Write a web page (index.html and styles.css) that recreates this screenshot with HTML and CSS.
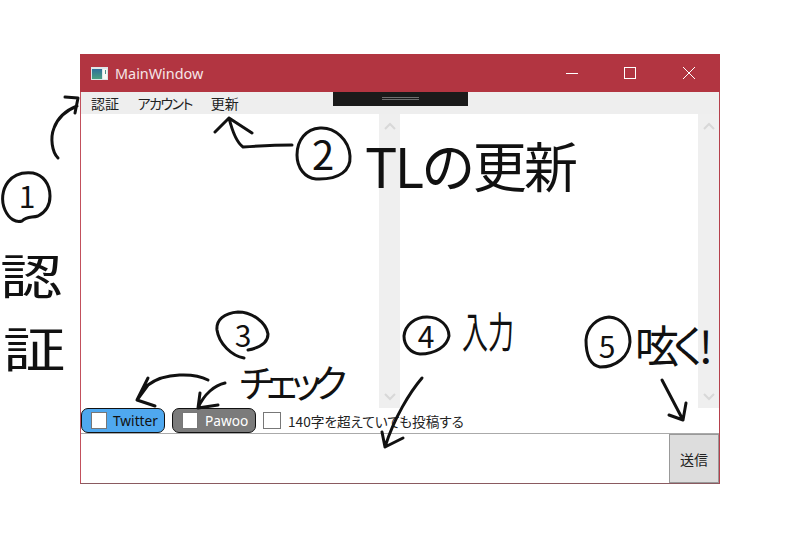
FILE: index.html
```html
<!DOCTYPE html>
<html lang="ja">
<head>
<meta charset="utf-8">
<title>MainWindow</title>
<link rel="stylesheet" href="styles.css">
</head>
<body>
<div class="stage">
  <div class="window">
    <header class="titlebar">
      <svg class="appicon" width="17" height="13" viewBox="0 0 17 13">
        <defs><linearGradient id="g" x1="0" y1="0" x2="0" y2="1"><stop offset="0" stop-color="#2f6f9a"/><stop offset="1" stop-color="#4a9f80"/></linearGradient></defs>
        <rect x="0" y="0" width="17" height="13" fill="#dfe6e8"/>
        <rect x="1" y="2" width="10" height="10" fill="url(#g)"/>
        <rect x="12" y="2" width="4" height="10" fill="#f8f8f4"/>
        <rect x="14" y="3" width="1" height="4" fill="#4d8f86"/>
      </svg>
      <span class="title">MainWindow</span>
      <div class="caption">
        <span class="capbtn"><svg width="12" height="12" viewBox="0 0 12 12"><path d="M0 6.5H12" class="capstroke"/></svg></span>
        <span class="capbtn"><svg width="12" height="12" viewBox="0 0 12 12"><rect x="0.5" y="0.5" width="11" height="11" class="capstroke"/></svg></span>
        <span class="capbtn"><svg width="12" height="12" viewBox="0 0 12 12"><path d="M0 0L12 12M12 0L0 12" class="capstroke"/></svg></span>
      </div>
    </header>
    <nav class="menu">
      <span class="menuitem">認証</span>
      <span class="menuitem menuitem-kana">アカウント</span>
      <span class="menuitem">更新</span>
      <div class="devbar"><i class="grip"></i></div>
    </nav>
    <main class="panes">
      <div class="list"></div>
      <div class="scroll"><svg class="chev" width="14" height="8" viewBox="0 0 14 8"><path d="M2 7L7 2L12 7"/></svg><svg class="chev" width="14" height="8" viewBox="0 0 14 8"><path d="M2 1L7 6L12 1"/></svg></div>
      <div class="list"></div>
      <div class="scroll"><svg class="chev" width="14" height="8" viewBox="0 0 14 8"><path d="M2 7L7 2L12 7"/></svg><svg class="chev" width="14" height="8" viewBox="0 0 14 8"><path d="M2 1L7 6L12 1"/></svg></div>
    </main>
    <div class="options">
      <label class="pill pill-twitter"><span class="box"></span>Twitter</label>
      <label class="pill pill-pawoo"><span class="box"></span>Pawoo</label>
      <label class="over"><span class="box"></span>140字を超えていても投稿する</label>
    </div>
    <div class="compose">
      <div class="input"></div>
      <button class="send">送信</button>
    </div>
  </div>
  <svg class="ink" width="800" height="538" viewBox="0 0 800 538">
    <!-- 1 -->
    <path d="M58 158C52 152 50 138 54 128C58 117 67 110 77 106M65 97L78 98L75 113"/>
    <path d="M22 221C16 223 9 219 5 210C1 201 2 190 8 182C14 174 24 172 33 173C43 175 50 184 50 196C50 206 46 212 38 216C32 218 27 216 22 221Z"/>
    <text class="digit" x="27" y="208">1</text>
    <text class="hand-s" transform="translate(0,294) scale(1.3,1)">認</text>
    <text class="hand-s" transform="translate(3,367) scale(1.3,1)">証</text>
    <!-- 2 -->
    <path d="M215 132L229 118L252 133M229 118C232 130 236 142 243 147C258 146 275 145 292 145"/>
    <path d="M316 179C305 178 297 168 297 155C297 140 306 129 320 128C335 127 349 140 350 156C351 170 340 180 316 179Z"/>
    <text class="digit digit-l" x="323" y="170">2</text>
    <text class="hand" x="365" y="188" textLength="213">TLの更新</text>
    <!-- 3 -->
    <path d="M244 358C232 356 219 344 217 330C216 320 224 313 238 312C252 312 266 322 268 334C268 344 258 348 248 350"/>
    <text class="digit" x="243" y="347">3</text>
    <text class="hand-c" x="238" y="397" textLength="112">チェック</text>
    <path d="M208 380C195 373 165 372 148 385L137 400M148 378L137 400L155 406"/>
    <path d="M225 383C215 385 204 394 198 408M200 393L198 408L218 405"/>
    <!-- 4 -->
    <path d="M420 354C410 353 404 345 404 336C405 325 415 317 427 317C440 317 449 326 449 336C447 346 436 354 420 354Z"/>
    <text class="digit" x="426" y="348">4</text>
    <text class="hand-i" transform="translate(462,348) scale(1,1.6)">入力</text>
    <path d="M422 378C410 392 394 418 385 447M382 432L385 447L403 438"/>
    <!-- 5 -->
    <path d="M600 367C590 365 586 354 586 340C587 327 597 318 609 317C622 318 630 328 630 342C629 356 617 367 600 367Z"/>
    <text class="digit" x="607" y="358">5</text>
    <text class="hand-k" x="635" y="363" textLength="78">呟く!</text>
    <path d="M662 380L683 420M669 415L683 420L686 403"/>
  </svg>
</div>
</body>
</html>
```
FILE: styles.css
```css
* { box-sizing: border-box; }
html, body { margin: 0; padding: 0; background: #fff; }
body { width: 800px; height: 538px; overflow: hidden; font-family: "Noto Sans CJK JP", "Noto Sans", sans-serif; }
.stage { position: relative; width: 800px; height: 538px; padding: 54px 80px; }
.window { width: 640px; height: 430px; display: flex; flex-direction: column; background: #fff; border-left: 1px solid #c2505c; border-right: 1px solid #b5404c; border-bottom: 1px solid #8a5a60; }
.titlebar { height: 38px; margin: 0 -1px; display: flex; align-items: center; background: #b23541; flex: none; padding-left: 11px; }
.appicon { flex: none; }
.title { margin-left: 7px; color: #f6e6e8; font: 14.4px "Noto Sans", sans-serif; }
.caption { margin-left: auto; display: flex; padding-right: 2px; }
.capbtn { width: 58.5px; height: 38px; display: flex; align-items: center; justify-content: center; }
.capstroke { fill: none; stroke: #fff; stroke-width: 1; }
.menu { position: relative; height: 22px; flex: none; background: #eeeeee; display: flex; align-items: center; font-size: 14px; color: #222; line-height: 22px; }
.menuitem { padding: 0 9.5px; font-feature-settings: "palt"; }
.menuitem:first-child { padding: 0 9px 0 10px; }
.menuitem-kana { letter-spacing: -1.5px; }
.devbar { position: absolute; left: 252px; top: 0; width: 135px; height: 14px; background: #1a1a1a; display: flex; justify-content: center; padding-top: 5px; }
.grip { display: block; width: 37px; height: 3px; border-top: 1px solid #6f6f6f; border-bottom: 1px solid #6f6f6f; }
.panes { height: 294px; flex: none; display: grid; grid-template-columns: 298px 21px 298px 21px; }
.scroll { background: #efefef; display: flex; flex-direction: column; align-items: center; justify-content: space-between; padding: 8px 0 7px; }
.chev { fill: none; stroke: #d8d8d8; stroke-width: 2; }
.options { height: 25px; flex: none; display: flex; align-items: center; font-size: 14px; color: #111; }
.pill { width: 84px; height: 25px; display: flex; align-items: center; border: 1px solid #111; border-radius: 7px; padding-left: 9px; font: 13.7px "Noto Sans", sans-serif; }
.pill-twitter { background: #4fa8ef; }
.pill-pawoo { margin-left: 7px; background: #7b7b7b; color: #fff; }
.box { width: 16px; height: 17px; flex: none; background: #fff; border: 1px solid #777; margin-right: 6px; }
.pill-pawoo .box { margin-right: 7px; }
.over { display: flex; align-items: center; margin-left: 7px; font-size: 13.65px; font-feature-settings: "palt"; color: #222; }
.over .box { width: 18px; margin-right: 7px; }
.compose { flex: 1; display: flex; border-top: 1px solid #aaa; }
.input { flex: 1; }
.send { width: 50px; background: #dddddd; border: 1px solid #999; padding: 0; font: 14px "Noto Sans CJK JP", sans-serif; color: #222; }
.ink { position: absolute; left: 0; top: 0; pointer-events: none; }
.ink path { fill: none; stroke: #111; stroke-width: 3; stroke-linecap: round; stroke-linejoin: round; }
.ink text { fill: #111; font-family: "Noto Sans CJK JP", sans-serif; font-weight: 400; }
.digit { font-size: 30px; text-anchor: middle; }
.digit-l { font-size: 40px; }
.hand { font-size: 54px; }
.hand-s { font-size: 48px; }
.hand-c { font-size: 38px; }
.hand-i { font-size: 26px; }
.hand-k { font-size: 44px; }
```
